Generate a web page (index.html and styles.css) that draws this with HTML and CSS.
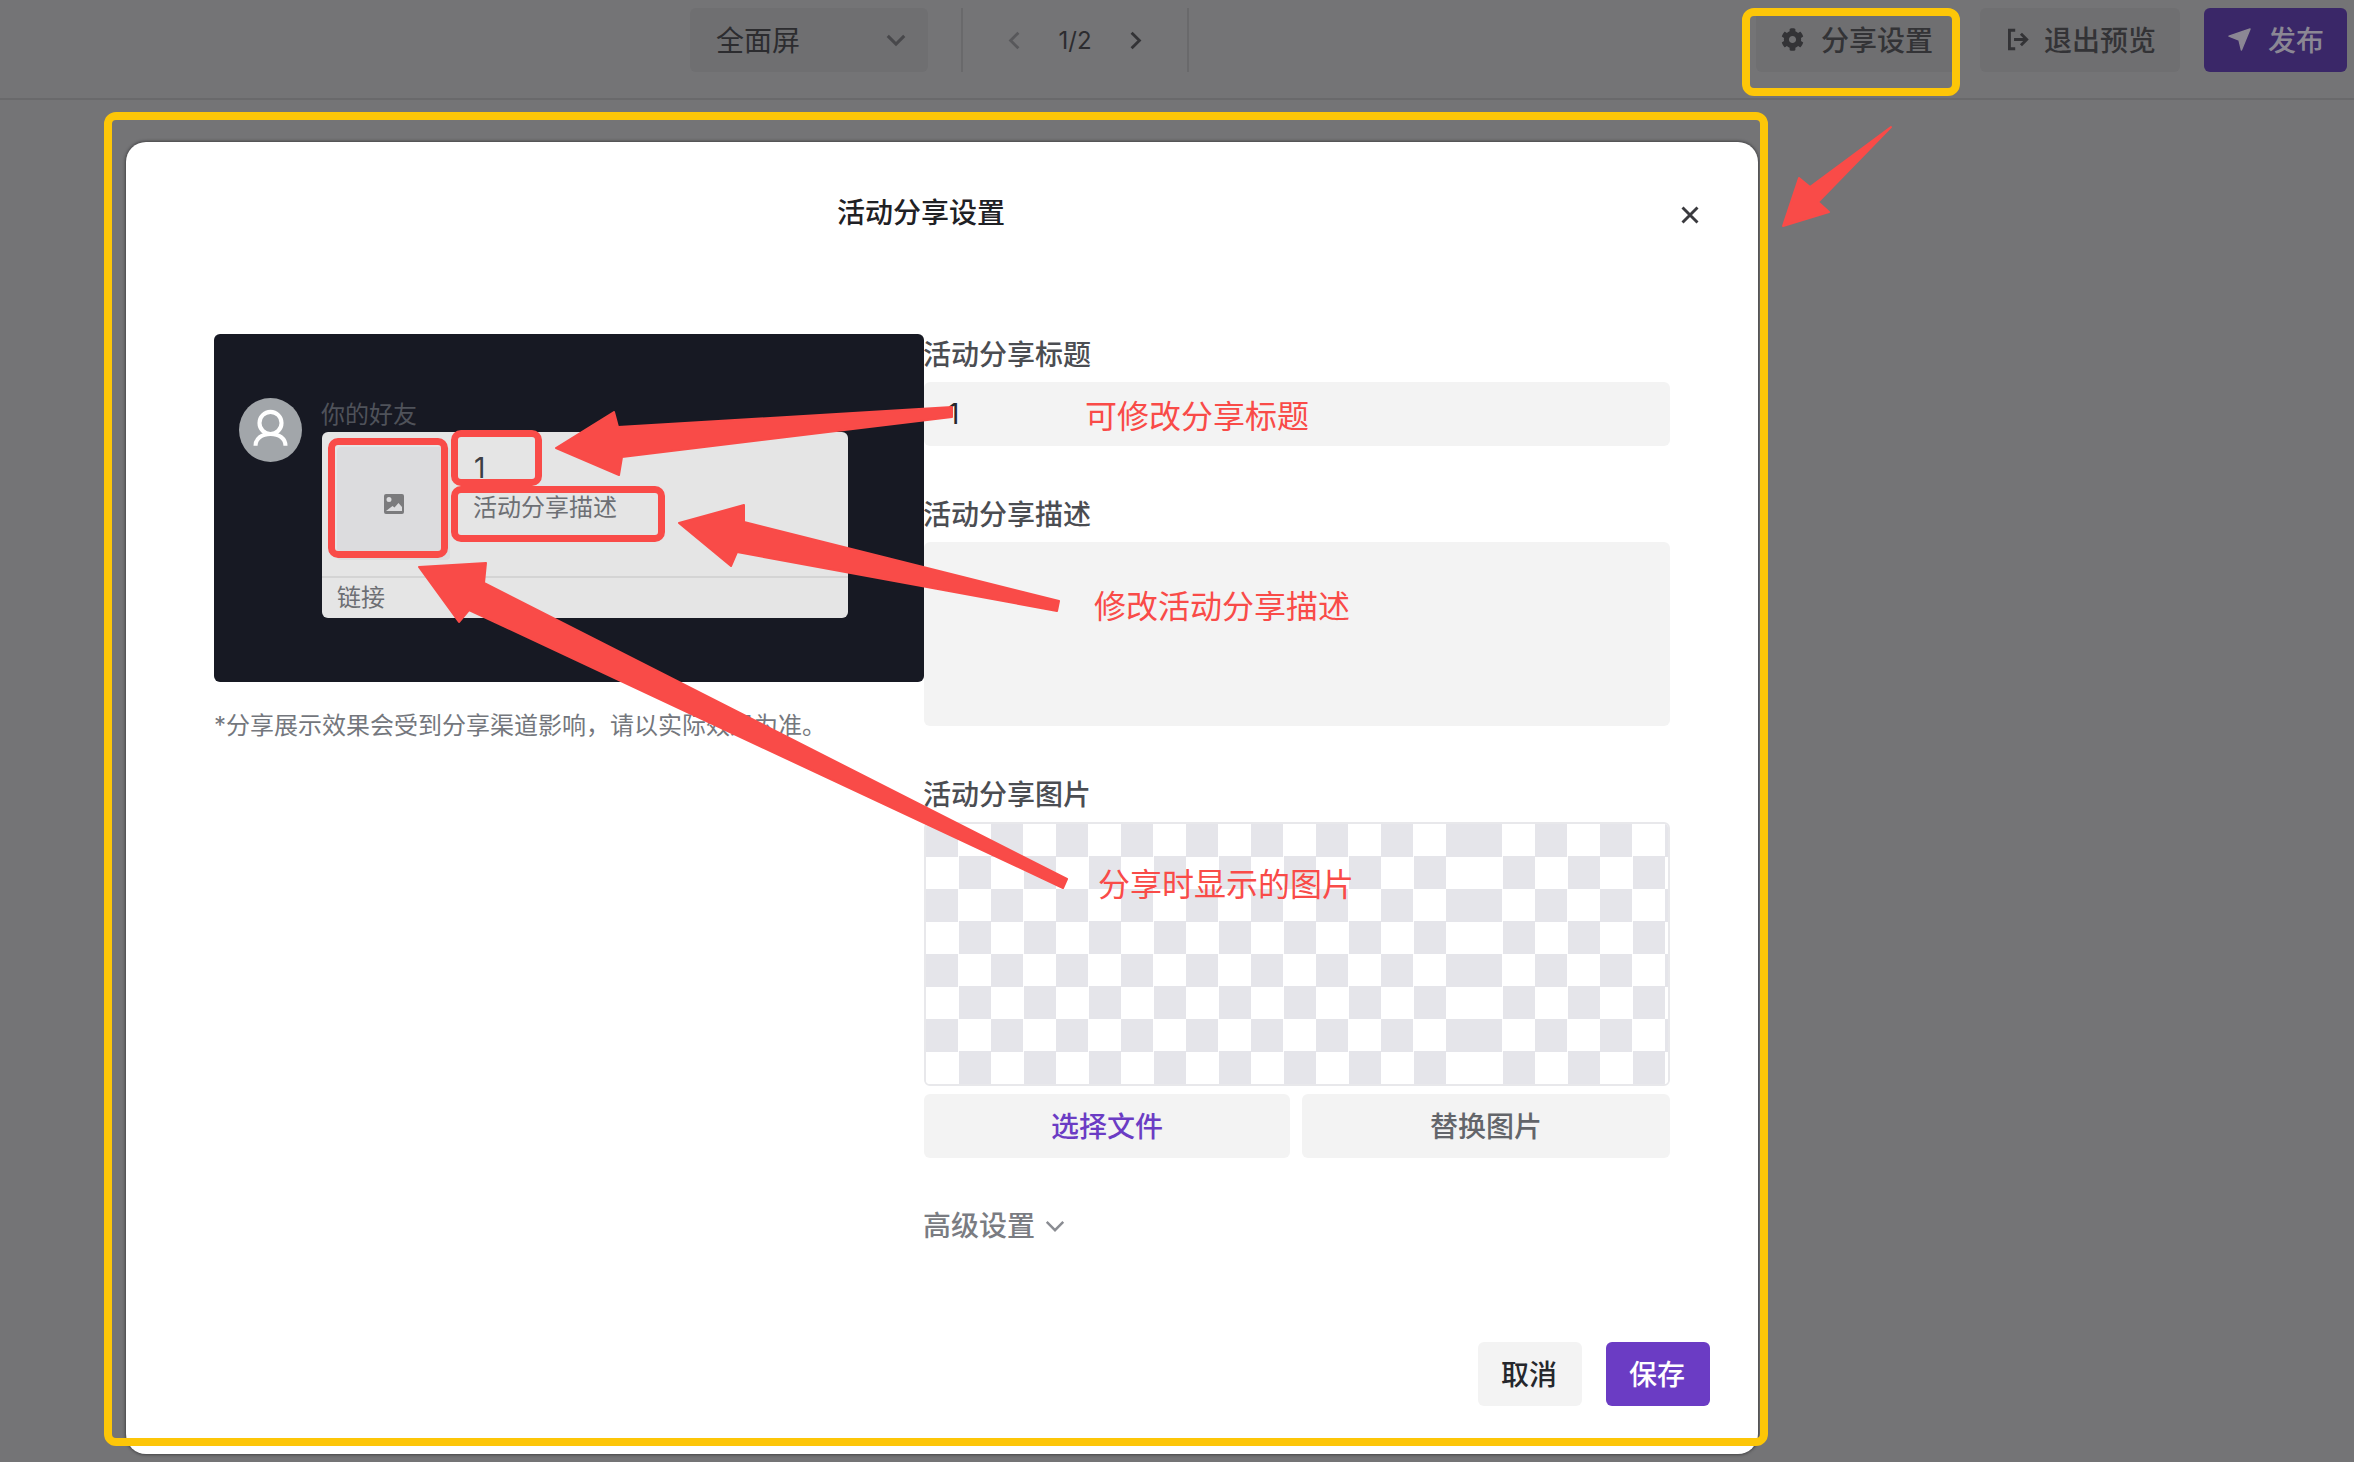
FILE: index.html
```html
<!DOCTYPE html>
<html lang="zh-CN">
<head>
    <meta charset="UTF-8">
    <title>活动分享设置</title>
    <link rel="stylesheet" href="styles.css">
</head>
<body>

    <header class="topbar">
        <div class="view-select">
            <span>全面屏</span>
            <svg class="chevron" viewBox="0 0 16 10"><path d="M2 2l6 6 6-6"/></svg>
        </div>
        <div class="pager">
            <svg class="pager-arrow muted" viewBox="0 0 10 16"><path d="M8 2L2 8l6 6"/></svg>
            <span class="pager-count">1/2</span>
            <svg class="pager-arrow" viewBox="0 0 10 16"><path d="M2 2l6 6-6 6"/></svg>
        </div>
        <div class="topbar-actions">
            <button class="top-btn share-btn">
                <svg class="top-icon" viewBox="0 0 512 512"><path fill="currentColor" d="M487.4 315.7l-42.6-24.6c4.3-23.2 4.3-47 0-70.2l42.6-24.6c4.9-2.8 7.1-8.6 5.5-14-11.1-35.6-30-67.8-54.7-94.6-3.8-4.1-10-5.1-14.8-2.3L380.8 110c-17.9-15.4-38.5-27.3-60.8-35.1V25.8c0-5.6-3.9-10.5-9.4-11.7-36.7-8.2-74.3-7.8-109.2 0-5.5 1.2-9.4 6.1-9.4 11.7V75c-22.2 7.9-42.8 19.8-60.8 35.1L88.7 85.5c-4.9-2.8-11-1.9-14.8 2.3-24.7 26.7-43.6 58.9-54.7 94.6-1.7 5.4.6 11.2 5.5 14L67.3 221c-4.3 23.2-4.3 47 0 70.2l-42.6 24.6c-4.9 2.8-7.1 8.6-5.5 14 11.1 35.6 30 67.8 54.7 94.6 3.8 4.1 10 5.1 14.8 2.3l42.6-24.6c17.9 15.4 38.5 27.3 60.8 35.1v49.2c0 5.6 3.9 10.5 9.4 11.7 36.7 8.2 74.3 7.8 109.2 0 5.5-1.2 9.4-6.1 9.4-11.7v-49.2c22.2-7.9 42.8-19.8 60.8-35.1l42.6 24.6c4.9 2.8 11 1.9 14.8-2.3 24.7-26.7 43.6-58.9 54.7-94.6 1.5-5.5-.7-11.3-5.6-14.1zM256 336c-44.1 0-80-35.9-80-80s35.9-80 80-80 80 35.9 80 80-35.9 80-80 80z"/></svg>
                <span>分享设置</span>
            </button>
            <button class="top-btn exit-btn">
                <svg class="top-icon" viewBox="0 0 20 20"><path class="line-icon" d="M8 2H3v16h5M7 10h11M13 5l5 5-5 5"/></svg>
                <span>退出预览</span>
            </button>
            <button class="top-btn publish-btn">
                <svg class="top-icon" viewBox="0 0 24 24"><path fill="currentColor" stroke="currentColor" stroke-width="1.500" stroke-linejoin="round" d="M1 8.500L23 1l-9 22-2.500-10.500z"/></svg>
                <span>发布</span>
            </button>
        </div>
    </header>

    <main class="modal">
        <div class="modal-head">
            <h2 class="modal-title">活动分享设置</h2>
            <button class="modal-close">
                <svg viewBox="0 0 16 16"><path d="M2 2l12 12M14 2L2 14"/></svg>
            </button>
        </div>

        <div class="modal-body">
            <section class="preview">
                <div class="preview-stage">
                    <div class="avatar">
                        <svg viewBox="0 0 40 40"><circle cx="20" cy="15.500" r="7"/><path d="M10.500 30c0-4.500 4-7.500 9.500-7.500s9.500 3 9.500 7.500"/></svg>
                    </div>
                    <div class="preview-msg">
                        <div class="preview-name">你的好友</div>
                        <div class="preview-card">
                            <div class="preview-top">
                                <div class="preview-thumb">
                                    <svg viewBox="0 0 20 20"><path fill-rule="evenodd" d="M2 0h16a2 2 0 012 2v16a2 2 0 01-2 2H2a2 2 0 01-2-2V2a2 2 0 012-2zm3 8a2.500 2.500 0 100-5 2.500 2.500 0 000 5zM2 17h16v-4l-3.500-4-4 4.500-2-1.500z"/></svg>
                                </div>
                                <div class="preview-text">
                                    <div class="preview-title">1</div>
                                    <div class="preview-desc">活动分享描述</div>
                                </div>
                            </div>
                            <div class="preview-link">链接</div>
                        </div>
                    </div>
                </div>
                <p class="preview-note">*分享展示效果会受到分享渠道影响&#xFF0C;请以实际效果为准。</p>
            </section>

            <form class="share-form">
                <label class="field-label">活动分享标题</label>
                <input class="field-input" type="text" value="1">

                <label class="field-label">活动分享描述</label>
                <textarea class="field-area"></textarea>

                <label class="field-label">活动分享图片</label>
                <div class="checker">
                    <div class="checker-tile first"></div>
                    <div class="checker-tile"></div>
                </div>
                <div class="file-btns">
                    <button type="button" class="file-btn pick">选择文件</button>
                    <button type="button" class="file-btn swap">替换图片</button>
                </div>

                <div class="advanced">
                    <span>高级设置</span>
                    <svg class="chevron" viewBox="0 0 16 10"><path d="M2 2l6 6 6-6"/></svg>
                </div>
            </form>
        </div>

        <div class="modal-foot">
            <button class="foot-btn cancel">取消</button>
            <button class="foot-btn save">保存</button>
        </div>
    </main>

    <!-- markup drawn on top of the screenshot -->
    <div class="mark yellow share-mark"></div>
    <div class="mark yellow modal-mark"></div>
    <div class="mark red thumb-mark"></div>
    <div class="mark red title-mark"></div>
    <div class="mark red desc-mark"></div>

    <svg class="arrows" viewBox="0 0 2354 1462">
        <polygon points="952,407 618,427 614,412 556,448 619,475 622,457 952,417"/>
        <polygon points="1059,601 744,522 744,505 679,523 731,566 737,552 1057,611"/>
        <polygon points="1067,879 484,583 486,563 419,567 459,622 469,610 1063,888"/>
        <polygon points="1891,127 1818,202 1829,212 1783,226 1799,178 1810,187"/>
    </svg>

    <span class="note-text note-title">可修改分享标题</span>
    <span class="note-text note-desc">修改活动分享描述</span>
    <span class="note-text note-image">分享时显示的图片</span>

</body>
</html>
```

FILE: styles.css
```css
* {
    margin: 0;
    padding: 0;
    box-sizing: border-box;
}
body {
    width: 2354px;
    height: 1462px;
    overflow: hidden;
    position: relative;
    background: #747476;
    font-family: Inter, "Noto Sans CJK SC", sans-serif;
    font-size: 28px;
}
button, input, textarea {
    font-family: inherit;
    font-size: inherit;
    border: none;
    outline: none;
}

/* top bar, dimmed by the modal backdrop */
.topbar {
    height: 100px;
    display: flex;
    align-items: flex-start;
    padding: 8px 7px 0 690px;
    border-bottom: 2px solid #69696b;
    color: #2c2c2f;
}
.view-select {
    width: 238px;
    height: 64px;
    display: flex;
    align-items: center;
    justify-content: space-between;
    padding: 0 21px 0 26px;
    background: #6f6f71;
    border-radius: 6px;
}
.view-select span {
    margin-top: -3px;
}
.chevron {
    width: 22px;
    height: 14px;
    fill: none;
    stroke: #48484b;
    stroke-width: 2.2;
}
.pager {
    margin-left: 33px;
    width: 228px;
    height: 64px;
    display: flex;
    align-items: center;
    justify-content: center;
    gap: 36px;
    border-left: 2px solid #69696b;
    border-right: 2px solid #69696b;
}
.pager-arrow {
    width: 13px;
    height: 21px;
    fill: none;
    stroke: #333336;
    stroke-width: 2.2;
}
.pager-arrow.muted {
    stroke: #58585b;
}
.pager-count {
    font-size: 24px;
    width: 36px;
    text-align: center;
}
.topbar-actions {
    margin-left: auto;
    display: flex;
    gap: 24px;
}
.top-btn {
    height: 64px;
    display: flex;
    align-items: center;
    gap: 17px;
    padding-bottom: 2px;
    border-radius: 6px;
    font-weight: 500;
    background: #6f6f71;
    color: #333336;
}
.top-icon {
    width: 23px;
    height: 23px;
    flex: none;
}
.line-icon {
    fill: none;
    stroke: currentColor;
    stroke-width: 2.500;
}
.share-btn {
    width: 200px;
    padding-left: 25px;
}
.exit-btn {
    width: 200px;
    padding-left: 26px;
    gap: 15px;
}
.publish-btn {
    width: 143px;
    padding-left: 24px;
    background: #3a2768;
    color: #8b8794;
}

/* modal */
.modal {
    width: 1632px;
    height: 1312px;
    margin: 42px 0 0 126px;
    display: flex;
    flex-direction: column;
    background: #fff;
    border-radius: 20px;
    box-shadow: 0 0 3px 1px #444446;
}
.modal-head {
    display: flex;
    align-items: center;
    height: 192px;
    padding: 0 48px 78px 46px;
}
.modal-title {
    flex: 1;
    text-align: center;
    font-size: 28px;
    font-weight: 500;
    line-height: 44px;
    color: #1f2125;
    padding-top: 28px;
}
.modal-close {
    width: 40px;
    height: 40px;
    margin-top: 32px;
    background: none;
    display: flex;
    align-items: center;
    justify-content: center;
}
.modal-close svg {
    width: 20px;
    height: 20px;
    fill: none;
    stroke: #3a3a3e;
    stroke-width: 2.3;
}
.modal-body {
    display: flex;
    padding-left: 88px;
}

/* left: share preview */
.preview {
    width: 710px;
}
.preview-stage {
    height: 348px;
    display: flex;
    align-items: flex-start;
    gap: 20px;
    padding: 64px 0 0 25px;
    background: #171923;
    border-radius: 6px;
}
.avatar {
    width: 63px;
    height: 64px;
    border-radius: 50%;
    background: #a2a6aa;
    flex: none;
}
.avatar svg {
    width: 63px;
    height: 64px;
    fill: none;
    stroke: #fff;
    stroke-width: 2.6;
}
.preview-msg {
    width: 526px;
}
.preview-name {
    font-size: 24px;
    line-height: 34px;
    color: #4f525a;
    margin-left: -1px;
}
.preview-card {
    height: 186px;
    background: #e5e5e5;
    border-radius: 6px;
}
.preview-top {
    height: 146px;
    display: flex;
    padding: 15px 0 0 15px;
    border-bottom: 2px solid #d4d4d4;
}
.preview-thumb {
    width: 113px;
    height: 113px;
    display: flex;
    align-items: center;
    justify-content: center;
    background: #dcdcde;
    border-radius: 4px;
}
.preview-thumb svg {
    width: 20px;
    height: 20px;
    fill: #7b7b7d;
}
.preview-text {
    margin-left: 23px;
    padding-top: 1px;
}
.preview-title {
    font-size: 28px;
    line-height: 40px;
    color: #3c3e44;
    padding-left: 1px;
}
.preview-desc {
    font-size: 24px;
    line-height: 40px;
    color: #6d6f74;
}
.preview-link {
    font-size: 24px;
    line-height: 40px;
    padding-left: 15px;
    color: #6d6f74;
}
.preview-note {
    margin-top: 26px;
    font-size: 24px;
    line-height: 36px;
    color: #74777d;
    white-space: nowrap;
}

/* right: form */
.share-form {
    width: 746px;
}
.field-label {
    display: block;
    height: 40px;
    padding-top: 3px;
    line-height: 37px;
    margin: 0 0 8px -1px;
    font-weight: 500;
    color: #4b4d52;
}
.field-input {
    display: block;
    width: 100%;
    height: 64px;
    padding: 0 24px;
    margin-bottom: 48px;
    background: #f3f3f3;
    border-radius: 6px;
    color: #25272c;
}
.field-area {
    display: block;
    width: 100%;
    height: 184px;
    margin-bottom: 48px;
    background: #f3f3f3;
    border-radius: 6px;
    resize: none;
}
.checker {
    height: 264px;
    display: flex;
    border: 2px solid #e8e8eb;
    border-radius: 6px;
    overflow: hidden;
}
.checker-tile {
    flex: 1;
    background-image: conic-gradient(#fff 0 25%, #e5e5ea 0 50%, #fff 0 75%, #e5e5ea 0);
    background-size: 65px 65px;
}
.checker-tile.first {
    flex: 0 0 544px;
}
.file-btns {
    display: flex;
    gap: 12px;
    margin-top: 8px;
}
.file-btn {
    height: 64px;
    padding-bottom: 2px;
    background: #f3f3f3;
    border-radius: 6px;
    font-weight: 500;
}
.file-btn.pick {
    width: 366px;
    color: #6b3cc4;
}
.file-btn.swap {
    flex: 1;
    color: #63656a;
}
.advanced {
    display: flex;
    align-items: center;
    gap: 9px;
    margin: 48px 0 0 -1px;
    line-height: 40px;
    font-weight: 500;
    color: #7a7c82;
}
.advanced .chevron {
    stroke: #8a8c92;
    stroke-width: 1.8;
}
.modal-foot {
    margin-top: auto;
    display: flex;
    justify-content: flex-end;
    gap: 24px;
    padding: 0 48px 48px 0;
}
.foot-btn {
    width: 104px;
    height: 64px;
    padding: 0 2px 2px 0;
    border-radius: 6px;
    font-weight: 500;
}
.foot-btn.cancel {
    background: #f3f3f3;
    color: #25272c;
}
.foot-btn.save {
    background: #6b3cc4;
    color: #fff;
}

/* annotations over the screenshot */
.mark {
    position: absolute;
    border-style: solid;
}
.mark.yellow {
    border-width: 8px;
    border-color: #fdc608;
    border-radius: 12px;
}
.mark.red {
    border-width: 7px;
    border-color: #f94b48;
    border-radius: 10px;
}
.share-mark {
    left: 1742px;
    top: 8px;
    width: 218px;
    height: 88px;
}
.modal-mark {
    left: 104px;
    top: 112px;
    width: 1664px;
    height: 1334px;
}
.thumb-mark {
    left: 328px;
    top: 438px;
    width: 120px;
    height: 120px;
}
.title-mark {
    left: 451px;
    top: 430px;
    width: 91px;
    height: 56px;
}
.desc-mark {
    left: 451px;
    top: 486px;
    width: 214px;
    height: 56px;
}
.arrows {
    position: absolute;
    left: 0;
    top: 0;
    width: 2354px;
    height: 1462px;
}
.arrows polygon {
    fill: #f94b48;
    stroke: #f94b48;
    stroke-width: 2;
    stroke-linejoin: round;
}
.note-text {
    position: absolute;
    font-size: 32px;
    line-height: 44px;
    color: #f94b48;
    white-space: nowrap;
}
.note-title {
    left: 1085px;
    top: 395px;
}
.note-desc {
    left: 1094px;
    top: 585px;
}
.note-image {
    left: 1098px;
    top: 863px;
}
```
